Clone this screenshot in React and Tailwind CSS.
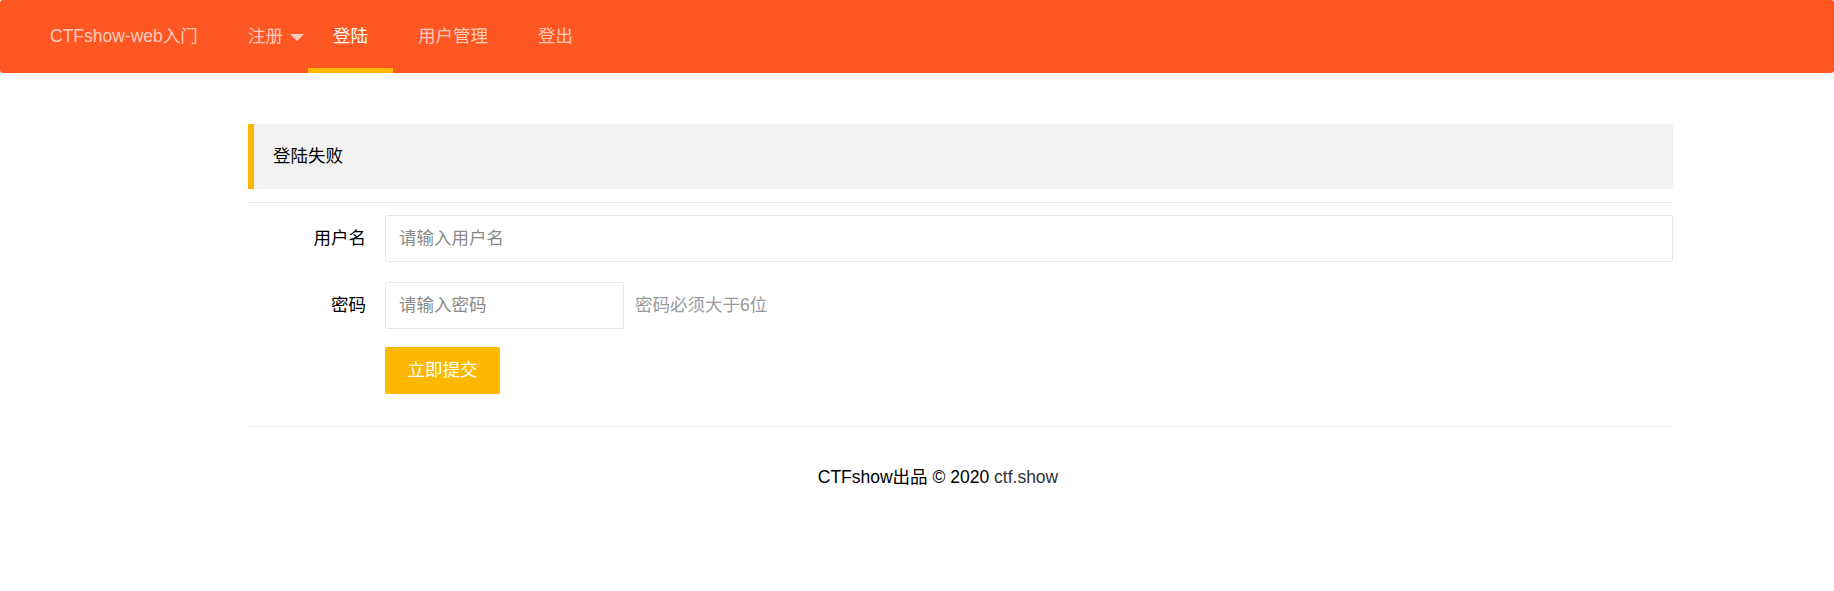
import React from 'react';

const font = { fontFamily: '"Liberation Sans", "Noto Sans CJK SC", sans-serif' };

const NavItem = ({ label, active, more }) => (
  <div
    className={`relative h-full flex items-center px-[25px] ${more ? 'pr-[4px] gap-[7px]' : ''} ${
      active ? 'text-white' : 'text-white/70'
    }`}
  >
    <span>{label}</span>
    {more && (
      <span className="w-0 h-0 border-t-[7px] border-x-[7px] border-t-white/70 border-x-transparent mt-[2px]" />
    )}
    {active && <span className="absolute left-0 right-0 bottom-0 h-[5px] bg-[#FFB800]" />}
  </div>
);

const FormRow = ({ label, children }) => (
  <div className="flex items-center">
    <label className="w-[137px] pr-[19px] text-right text-black">{label}</label>
    {children}
  </div>
);

export default function App() {
  return (
    <div className="min-h-[591px] bg-white text-[17.5px]" style={font}>
      <header className="h-[73px] bg-[#FF5722] rounded-[3px] flex items-stretch">
        <div className="w-[223px] pl-[50px] flex items-center text-white/70 whitespace-nowrap">
          CTFshow-web入门
        </div>
        <nav className="flex items-stretch">
          <NavItem label="注册" more />
          <NavItem label="登陆" active />
          <NavItem label="用户管理" />
          <NavItem label="登出" />
        </nav>
      </header>

      <div className="pl-[248px] pr-[161px]">
        <div className="mt-[51px] h-[65px] bg-[#F2F2F2] border-l-[6px] border-[#FFB800] rounded-r-[2px] flex items-center pl-[19px] text-black">
          登陆失败
        </div>
        <div className="mt-[13px] h-px bg-[#e6e6e6]" />

        <form className="mt-[12px] flex flex-col">
          <FormRow label="用户名">
            <input
              type="text"
              placeholder="请输入用户名"
              className="flex-1 h-[47px] border border-[#e6e6e6] rounded-[2px] pl-[13px] outline-none placeholder:text-[#8a8a8a]"
            />
          </FormRow>
          <div className="mt-[20px]">
            <FormRow label="密码">
              <input
                type="password"
                placeholder="请输入密码"
                className="w-[239px] h-[47px] border border-[#e6e6e6] rounded-[2px] pl-[13px] outline-none placeholder:text-[#8a8a8a]"
              />
              <span className="ml-[11px] text-[#999]">密码必须大于6位</span>
            </FormRow>
          </div>
          <div className="mt-[18px] pl-[137px]">
            <button
              type="button"
              className="h-[47px] w-[115px] bg-[#FFB800] text-white rounded-[2px]"
            >
              立即提交
            </button>
          </div>
        </form>

        <div className="mt-[32px] h-px bg-[#eeeeee]" />

        <footer className="mt-[40px] pr-[45px] text-center text-black leading-[20px]">
          CTFshow出品 © 2020 <a className="text-[#333]">ctf.show</a>
        </footer>
      </div>
    </div>
  );
}
